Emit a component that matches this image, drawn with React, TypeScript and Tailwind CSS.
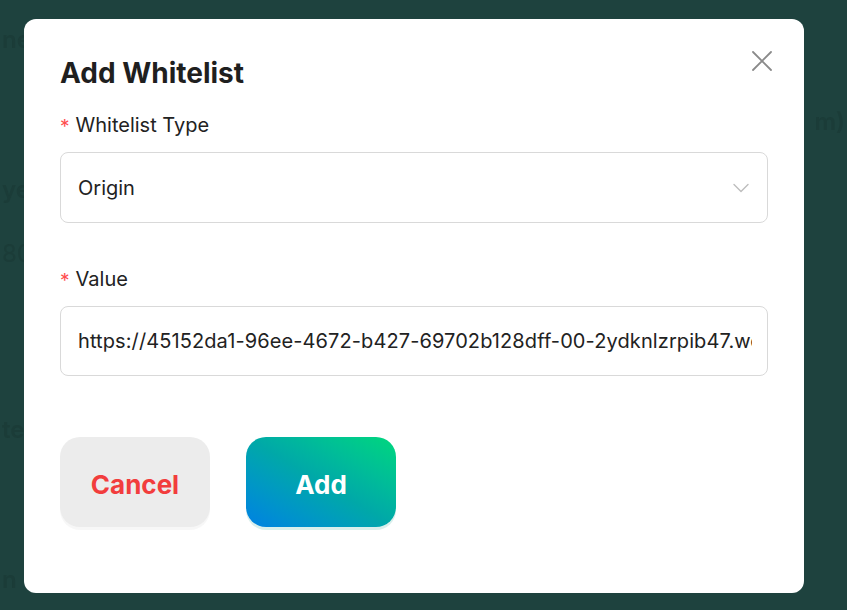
import React from 'react';

const font = { fontFamily: 'Inter, "Noto Sans", sans-serif' };

function Backdrop() {
    // faint page content sitting behind the dark overlay
    return (
        <div className="absolute inset-0 flex justify-between px-[2px] pt-[22px] text-[#1b3c38] font-semibold text-[24px] blur-[0.6px]" style={font}>
            <div className="flex flex-col">
                <span className="h-[150px]">ne</span>
                <span className="h-[64px]">ye</span>
                <span className="h-[176px] font-normal">80</span>
                <span className="h-[150px]">te</span>
                <span>n</span>
            </div>
            <div className="flex flex-col pt-[82px]">
                <span>m)</span>
            </div>
        </div>
    );
}

function Label({ children }: { children: React.ReactNode }) {
    return (
        <div className="flex items-center gap-[6px] h-[28px] text-[20px] text-[#222]">
            <span className="text-[#ff4d4f] text-[19px] leading-none mt-[3px]">*</span>
            <span>{children}</span>
        </div>
    );
}

export default function App() {
    return (
        <div className="relative w-[847px] h-[610px] bg-[#1e423e] overflow-hidden" style={font}>
            <Backdrop />
            <div className="absolute left-[24px] top-[19px] w-[780px] h-[574px] bg-white rounded-[12px] pt-[37px] px-[36px]">
                <button className="absolute right-[30px] top-[30px] w-[24px] h-[24px] flex items-center justify-center text-[#8a8a8a]">
                    <svg width="22" height="22" viewBox="0 0 22 22" fill="none" stroke="currentColor" strokeWidth="1.8" strokeLinecap="round">
                        <path d="M2 2 L20 20 M20 2 L2 20" />
                    </svg>
                </button>

                <h2 className="text-[28px] leading-[34px] font-bold text-[#1f1f1f]">Add Whitelist</h2>

                <div className="mt-[21px]">
                    <Label>Whitelist Type</Label>
                </div>
                <div className="mt-[13px] h-[71px] w-[708px] border border-[#d9d9d9] rounded-[8px] flex items-center justify-between pl-[17px] pr-[18px]">
                    <span className="text-[20px] text-[#222]">Origin</span>
                    <svg width="16" height="10" viewBox="0 0 16 10" fill="none" stroke="#bdbdbd" strokeWidth="1.4" strokeLinecap="round" strokeLinejoin="round">
                        <path d="M1 1.5 L8 8.5 L15 1.5" />
                    </svg>
                </div>

                <div className="mt-[42px]">
                    <Label>Value</Label>
                </div>
                <div className="mt-[13px] h-[70px] w-[708px] border border-[#d9d9d9] rounded-[8px] flex items-center pl-[17px] pr-[15px] overflow-hidden">
                    <input
                        readOnly
                        value="https://45152da1-96ee-4672-b427-69702b128dff-00-2ydknlzrpib47.worf.replit.dev"
                        className="w-full outline-none text-[20px] text-[#222] bg-transparent tracking-[0.005em]"
                        style={font}
                    />
                </div>

                <div className="mt-[61px] flex gap-[36px]">
                    <button className="w-[150px] h-[90px] rounded-[20px] bg-[#ececec] shadow-[0_3px_0_rgba(0,0,0,0.03)] text-[#f23d3d] text-[26px] font-bold pt-[4px]">
                        Cancel
                    </button>
                    <button className="w-[150px] h-[90px] rounded-[20px] bg-gradient-to-tr from-[#0080e3] via-[#00a8a8] to-[#00d77c] shadow-[0_3px_0_rgba(0,150,130,0.15)] text-white text-[26px] font-bold pt-[4px]">
                        Add
                    </button>
                </div>
            </div>
        </div>
    );
}
